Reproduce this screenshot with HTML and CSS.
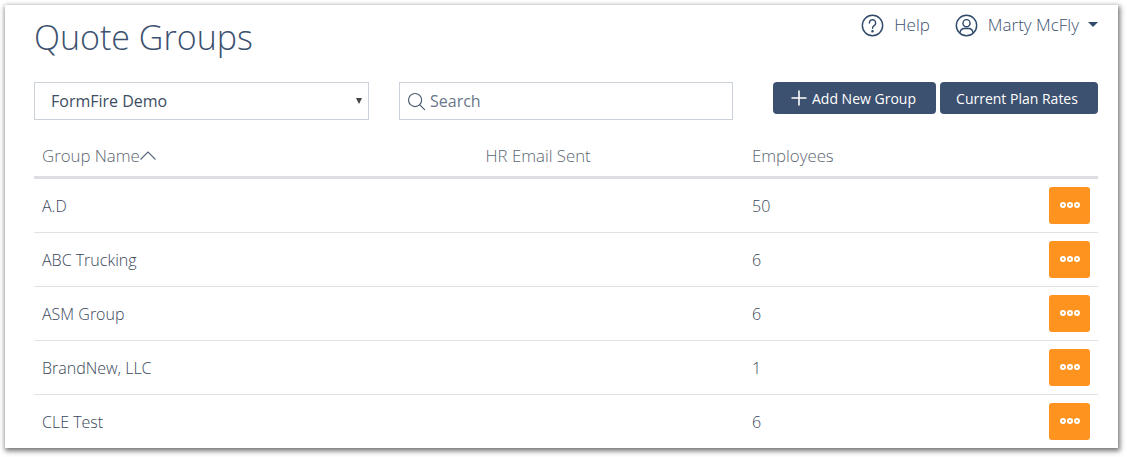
FILE: index.html
```html
<!DOCTYPE html>
<html lang="en">
<head>
<meta charset="utf-8">
<title>Quote Groups</title>
<link rel="stylesheet" href="styles.css">
</head>
<body>
<main class="card">
  <header class="top">
    <h1 class="title">Quote Groups</h1>
    <nav class="usernav">
      <a class="navitem">
        <svg class="navicon" viewBox="0 0 24 24" fill="none" stroke="#2f4a6b" stroke-width="1.5"><circle cx="12" cy="12" r="10.6"/><path d="M8.7 9.3a3.3 3.3 0 1 1 5 2.9c-1.1.7-1.7 1.3-1.7 2.7" stroke-linecap="round"/><circle cx="12" cy="18" r=".6" fill="#2f4a6b"/></svg>
        <span>Help</span>
      </a>
      <a class="navitem navuser">
        <svg class="navicon" viewBox="0 0 24 24" fill="none" stroke="#2f4a6b" stroke-width="1.5"><circle cx="12" cy="12" r="10.6"/><circle cx="12" cy="9.6" r="3.7"/><path d="M5.2 19.6c.4-3 2.8-4.4 4.6-4.4h4.4c1.800 0 4.200 1.400 4.600 4.400"/></svg>
        <span>Marty McFly</span>
        <i class="caret"></i>
      </a>
    </nav>
  </header>
  <section class="toolbar">
    <div class="select"><span>FormFire Demo</span><i class="selarrow"></i></div>
    <div class="search">
      <svg class="searchicon" viewBox="0 0 20 20" fill="none" stroke="#4a5a70" stroke-width="1.2"><circle cx="8.500" cy="8.500" r="6.900"/><path d="M13.500 13.500l5 5" stroke-linecap="round"/></svg>
      <span>Search</span>
    </div>
    <div class="actions">
      <button class="btn btn-add"><svg class="plus" viewBox="0 0 16 16" stroke="#fff" stroke-width="1.600"><path d="M8 .5v15M.5 8h15"/></svg>Add New Group</button>
      <button class="btn btn-rates">Current Plan Rates</button>
    </div>
  </section>
  <div class="table">
    <div class="row head">
      <div class="c-name">Group Name<svg class="sort" viewBox="0 0 16 9" fill="none" stroke="#56657a" stroke-width="1.100"><path d="M.5 8.500L8 1l7.500 7.500"/></svg></div>
      <div class="c-hr">HR Email Sent</div>
      <div class="c-emp">Employees</div>
    </div>
    <div class="row"><div class="c-name">A.D</div><div class="c-hr"></div><div class="c-emp">50</div><button class="more"><i></i><i></i><i></i></button></div>
    <div class="row"><div class="c-name">ABC Trucking</div><div class="c-hr"></div><div class="c-emp">6</div><button class="more"><i></i><i></i><i></i></button></div>
    <div class="row"><div class="c-name">ASM Group</div><div class="c-hr"></div><div class="c-emp">6</div><button class="more"><i></i><i></i><i></i></button></div>
    <div class="row"><div class="c-name">BrandNew, LLC</div><div class="c-hr"></div><div class="c-emp">1</div><button class="more"><i></i><i></i><i></i></button></div>
    <div class="row"><div class="c-name">CLE Test</div><div class="c-hr"></div><div class="c-emp">6</div><button class="more"><i></i><i></i><i></i></button></div>
  </div>
</main>
</body>
</html>
```
FILE: styles.css
```css
* { box-sizing: border-box; }
html, body { margin: 0; height: 100%; background: #fff; overflow: hidden; }
body { padding: 5px 9px 9px 5px; font-family: "Open Sans", sans-serif; color: #3d5068; }
.card {
  height: 443px;
  padding: 0 20px 0 29px;
  background: #fff;
  overflow: hidden;
  box-shadow: 1px 2px 5px 1px rgba(0,0,0,.55);
}
.top { display: flex; justify-content: space-between; height: 77px; }
.title { margin: 8px 0 0; font-size: 34px; line-height: 48px; font-weight: 300; color: #3c5170; }
.usernav { display: flex; align-items: flex-start; padding-top: 8px; font-size: 17px; font-weight: 300; color: #3c5170; }
.navitem { display: flex; align-items: center; height: 24px; }
.navitem span { margin-top: -2px; }
.navicon { width: 23px; height: 23px; margin-right: 10px; }
.navuser { margin-left: 25px; }
.caret { width: 0; height: 0; margin-left: 9px; margin-top: -2px; border: 5px solid transparent; border-top-color: #2f4a6b; border-bottom: 0; }
.toolbar { display: flex; align-items: flex-start; height: 54px; }
.select, .search { display: flex; align-items: center; height: 38px; border: 1px solid #ccd2da; font-size: 16px; }
.select { width: 335px; padding: 0 6px 0 16px; justify-content: space-between; color: #3d4d63; }
.selarrow { width: 0; height: 0; border: 3px solid transparent; border-top: 6px solid #444; border-bottom: 0; }
.search { width: 334px; margin-left: 30px; padding-left: 7px; color: #69778a; }
.searchicon { width: 19px; height: 19px; margin-right: 4px; }
.actions { display: flex; gap: 4px; margin-left: auto; }
.btn { display: flex; align-items: center; justify-content: center; height: 32px; padding: 0; border: 0; border-radius: 4px; background: #3c506f; color: #fff; font: 500 14px "Open Sans", sans-serif; }
.btn-add { width: 163px; padding-right: 2px; }
.btn-rates { width: 158px; padding-right: 4px; }
.plus { width: 16px; height: 16px; margin-right: 5px; }
.row { display: flex; align-items: center; height: 54px; border-bottom: 1px solid #e0e2e8; font-size: 16px; font-weight: 300; color: #38475a; }
.row.head { height: 43px; padding-bottom: 2px; border-bottom: 3px solid #dcdee4; font-size: 16.800px; color: #5b6672; }
.c-name { width: 451.500px; padding-left: 8px; display: flex; align-items: center; }
.c-hr { width: 266.500px; }
.c-emp { flex: 1; }
.sort { width: 16px; height: 9px; }
.more { display: flex; align-items: center; justify-content: center; gap: 1px; width: 41px; height: 37px; margin-right: 8px; padding: 0 0 2px; border: 0; border-radius: 3px; background: #ff9320; }
.more i { width: 6px; height: 6px; border: 2px solid #fff; border-radius: 50%; }
```
